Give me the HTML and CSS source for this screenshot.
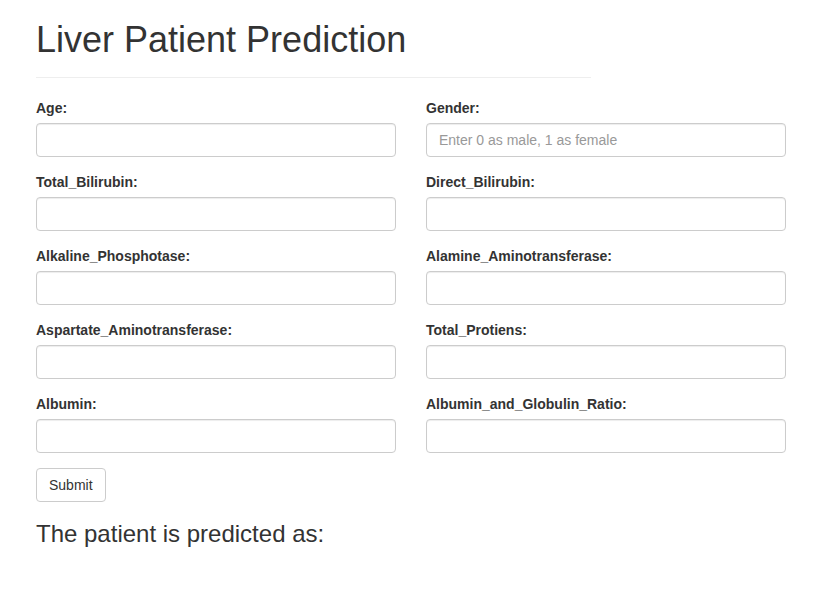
FILE: index.html
```html
<!DOCTYPE html>
<html>
<head>
<meta charset="utf-8">
<title>Liver Patient Prediction</title>
<link rel="stylesheet" href="styles.css">
</head>
<body>
<div class="page">
  <h1 class="title">Liver Patient Prediction</h1>
  <hr class="rule">
  <form class="form">
    <div class="grid">
      <div class="group"><label class="label">Age:</label><input class="input" type="text"></div>
      <div class="group"><label class="label">Gender:</label><input class="input" type="text" placeholder="Enter 0 as male, 1 as female"></div>
      <div class="group"><label class="label">Total_Bilirubin:</label><input class="input" type="text"></div>
      <div class="group"><label class="label">Direct_Bilirubin:</label><input class="input" type="text"></div>
      <div class="group"><label class="label">Alkaline_Phosphotase:</label><input class="input" type="text"></div>
      <div class="group"><label class="label">Alamine_Aminotransferase:</label><input class="input" type="text"></div>
      <div class="group"><label class="label">Aspartate_Aminotransferase:</label><input class="input" type="text"></div>
      <div class="group"><label class="label">Total_Protiens:</label><input class="input" type="text"></div>
      <div class="group"><label class="label">Albumin:</label><input class="input" type="text"></div>
      <div class="group"><label class="label">Albumin_and_Globulin_Ratio:</label><input class="input" type="text"></div>
    </div>
    <button class="btn" type="button">Submit</button>
  </form>
  <h3 class="result">The patient is predicted as:</h3>
</div>
</body>
</html>
```

FILE: styles.css
```css
* { box-sizing: border-box; }
html, body { margin: 0; padding: 0; }
body {
  font-family: "Liberation Sans", Arial, Helvetica, sans-serif;
  font-size: 14px;
  line-height: 1.42857143;
  color: #333;
  background: #fff;
}
.page {
  width: 750px;
  margin-left: 36px;
}
.title {
  font-size: 36px;
  font-weight: 500;
  line-height: 1.1;
  margin: 20px 0 0 0;
}
.rule {
  width: 555px;
  margin: 17px 0 20px 0;
  border: 0;
  border-top: 1px solid #eee;
  height: 0;
}
.form { margin: 0; }
.grid {
  display: grid;
  grid-template-columns: 360px 360px;
  column-gap: 30px;
}
.group {
  margin-bottom: 15px;
}
.label {
  display: block;
  font-weight: bold;
  margin-bottom: 5px;
  line-height: 20px;
}
.input {
  display: block;
  width: 100%;
  height: 34px;
  padding: 6px 12px;
  font-family: inherit;
  font-size: 14px;
  line-height: 1.42857143;
  color: #555;
  background: #fff;
  border: 1px solid #ccc;
  border-radius: 4px;
  box-shadow: inset 0 1px 1px rgba(0,0,0,.075);
  outline: none;
}
.input::placeholder { color: #999; opacity: 1; }
.btn {
  display: inline-block;
  height: 34px;
  padding: 6px 12px;
  font-family: inherit;
  font-size: 14px;
  line-height: 1.42857143;
  color: #333;
  background: #fff;
  border: 1px solid #ccc;
  border-radius: 4px;
  cursor: pointer;
}
.result {
  font-size: 24px;
  font-weight: 500;
  line-height: 1.1;
  margin: 19px 0 10px 0;
}
```
